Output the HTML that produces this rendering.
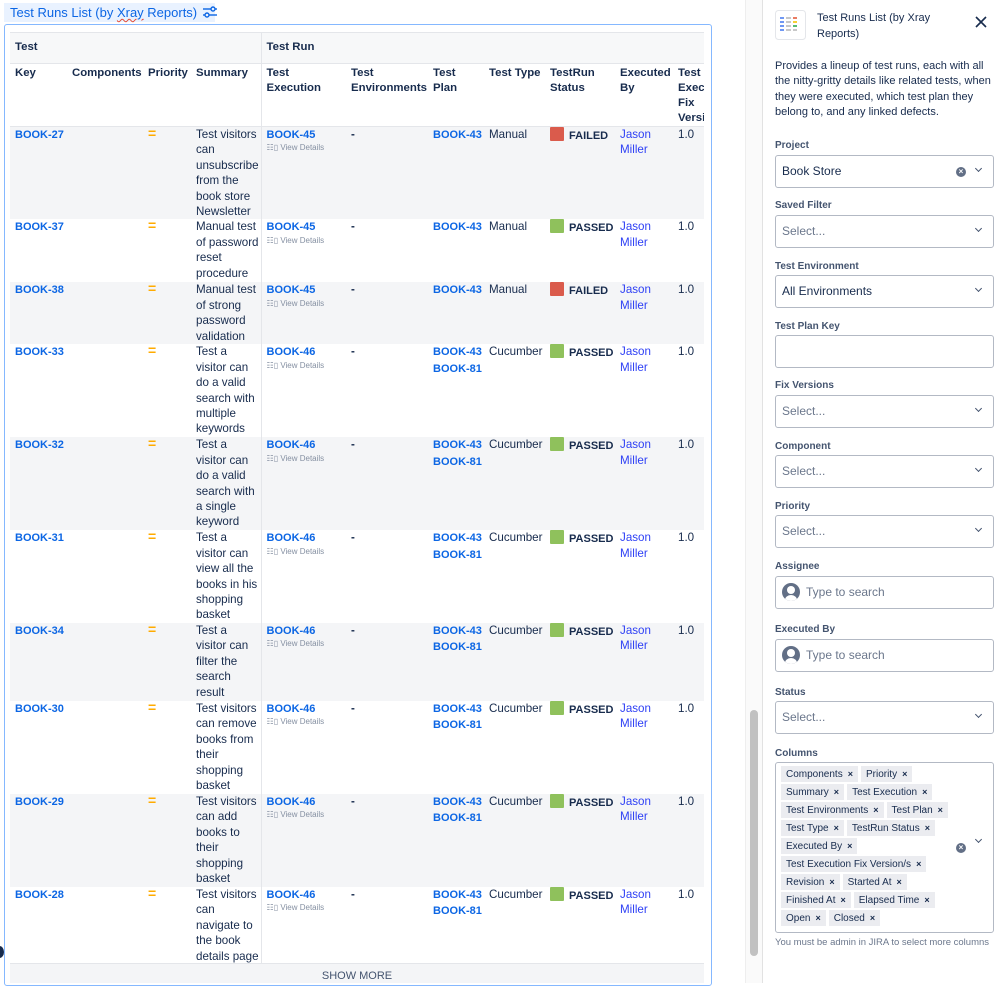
<!DOCTYPE html>
<html><head><meta charset="utf-8"><style>
*{box-sizing:border-box;margin:0;padding:0}
body{width:999px;height:983px;overflow:hidden;background:#fff;font-family:"Liberation Sans",sans-serif;color:#172b4d;position:relative}
.ttl{position:absolute;left:4px;top:3px;width:211px;height:19px;background:#e9f2ff;color:#0c66e4;font-size:13px;line-height:19px;padding-left:6px;white-space:nowrap}
.ttl u{text-decoration:underline wavy #e34935;text-decoration-thickness:1px}
.frame{position:absolute;left:4px;top:24px;width:708px;height:962px;border:1px solid #85b8ff;border-radius:3px}
.wrap{position:absolute;left:10px;top:32px;width:694px;height:931px;overflow:hidden}
table{border-collapse:collapse;table-layout:fixed;width:740px;font-size:11.6px;line-height:15.4px}
td,th{vertical-align:top;text-align:left;padding:0 0 0 5px;overflow:hidden}
td:nth-child(4){white-space:nowrap}
th{font-weight:bold;background:#fff;font-size:11.4px}
tr.g1 th{background:#f7f8f9;height:31px;vertical-align:middle;border-top:1px solid #e4e6ea;border-bottom:1px solid #e4e6ea}
tr.g2 th{height:63px;border-bottom:1px solid #e4e6ea;padding-top:2px;line-height:15px}
.nw{white-space:nowrap}
.sep{border-right:1px solid #e4e6ea}
tr.o td{background:#f4f5f7}
a{color:#0c66e4;font-weight:bold;text-decoration:none;white-space:nowrap;font-size:11px}
.p{color:#ffab00;font-weight:bold;font-size:14px;line-height:13px}
.vd{font-size:8px;color:#8590a2;line-height:10px;display:block;white-space:nowrap}
.st{display:inline-block;width:14px;height:14px;vertical-align:-2px;margin-right:5px;border-radius:1px}
.s{white-space:nowrap}.s b{font-size:11px}
.f{background:#da5b4c}.ps{background:#8fc15c}
.jm{color:#2d3ff5}
.sm{position:absolute;left:10px;top:963px;width:694px;height:20px;background:#f4f5f7;border-top:1px solid #e4e6ea;text-align:center;font-size:11px;line-height:24px;color:#44546f}
.sbt{position:absolute;left:745px;top:0;width:18px;height:983px;background:#fafafa;border-left:1px solid #eee;border-right:1px solid #e2e2e2}
.thumb{position:absolute;left:750px;top:710px;width:8px;height:246px;background:#c1c1c1;border-radius:4px}
.pn{position:absolute;left:763px;top:0;width:236px;height:983px;background:#fff}
.lbl{position:absolute;left:775px;font-size:10px;font-weight:bold;color:#44546f}
.in{position:absolute;left:775px;width:219px;height:33px;border:1px solid #b3b9c4;border-radius:3px;font-size:12px;line-height:31px;padding-left:6px;color:#172b4d}
.in.ph{color:#6b778c}
.chev{position:absolute;right:12px;top:0;font-size:10px;color:#44546f}
.chev:after{content:"";display:inline-block;width:4px;height:4px;border-right:1.5px solid #44546f;border-bottom:1.5px solid #44546f;transform:rotate(45deg);margin-bottom:3px}
.clr{position:absolute;right:27px;top:11px;width:10px;height:10px;border-radius:50%;background:#626f86;color:#fff;font-size:8px;line-height:10px;text-align:center;font-weight:bold}
.av{display:inline-block;width:18px;height:18px;border-radius:50%;background:#626f86;vertical-align:-5px;margin-right:6px;position:relative;overflow:hidden}
.av:before{content:"";position:absolute;left:5px;top:3px;width:8px;height:8px;border-radius:50%;background:#fff}
.av:after{content:"";position:absolute;left:3px;top:12px;width:12px;height:10px;border-radius:50%;background:#fff}
.tags{position:absolute;left:775px;top:762px;width:219px;height:171px;border:1px solid #b3b9c4;border-radius:3px;padding:3px 0 0 5px}
.tl{width:180px;font-size:0;line-height:0}
.tg{display:inline-block;background:#ebecf0;font-size:10px;height:16px;line-height:16px;padding:0 5px;margin:0 3px 2px 0;color:#172b4d;white-space:nowrap}
.tg b{font-size:9px;margin-left:5px}
</style></head><body>
<div class="ttl">Test Runs List (by <u>Xray</u> Reports) <svg width="14" height="12" viewBox="0 0 14 12" style="vertical-align:-1px;margin-left:2px"><g stroke="#0c66e4" stroke-width="1.4" fill="none"><line x1="0" y1="3" x2="14" y2="3"/><line x1="0" y1="9" x2="14" y2="9"/><circle cx="10" cy="3" r="2" fill="#e9f2ff"/><circle cx="4" cy="9" r="2" fill="#e9f2ff"/></g></svg></div>
<div class="frame"></div>
<div style="position:absolute;left:-5px;top:946px;width:9px;height:12px;border-radius:50%;background:#172b4d"></div>
<div class="wrap"><table>
<colgroup><col style="width:57px"><col style="width:76px"><col style="width:48px"><col style="width:70px"><col style="width:85px"><col style="width:82px"><col style="width:56px"><col style="width:61px"><col style="width:70px"><col style="width:58px"><col style="width:77px"></colgroup>
<tr class="g1"><th colspan="4" class="sep">Test</th><th colspan="7">Test Run</th></tr>
<tr class="g2"><th>Key</th><th class="nw">Components</th><th>Priority</th><th class="sep">Summary</th><th>Test<br>Execution</th><th class="nw">Test<br>Environments</th><th>Test<br>Plan</th><th class="nw">Test Type</th><th>TestRun<br>Status</th><th>Executed<br>By</th><th>Test<br>Execution<br>Fix<br>Version</th></tr>
<tr class="o" style="height:92px"><td><a>BOOK-27</a></td><td></td><td class="p">=</td><td class="sep">Test visitors<br>can<br>unsubscribe<br>from the<br>book store<br>Newsletter</td><td><a>BOOK-45</a><span class="vd">☷▯ View Details</span></td><td><b>-</b></td><td><a>BOOK-43</a></td><td>Manual</td><td class="s"><span class="st f"></span><b>FAILED</b></td><td class="jm">Jason<br>Miller</td><td>1.0</td></tr>
<tr style="height:63px"><td><a>BOOK-37</a></td><td></td><td class="p">=</td><td class="sep">Manual test<br>of password<br>reset<br>procedure</td><td><a>BOOK-45</a><span class="vd">☷▯ View Details</span></td><td><b>-</b></td><td><a>BOOK-43</a></td><td>Manual</td><td class="s"><span class="st ps"></span><b>PASSED</b></td><td class="jm">Jason<br>Miller</td><td>1.0</td></tr>
<tr class="o" style="height:62px"><td><a>BOOK-38</a></td><td></td><td class="p">=</td><td class="sep">Manual test<br>of strong<br>password<br>validation</td><td><a>BOOK-45</a><span class="vd">☷▯ View Details</span></td><td><b>-</b></td><td><a>BOOK-43</a></td><td>Manual</td><td class="s"><span class="st f"></span><b>FAILED</b></td><td class="jm">Jason<br>Miller</td><td>1.0</td></tr>
<tr style="height:93px"><td><a>BOOK-33</a></td><td></td><td class="p">=</td><td class="sep">Test a<br>visitor can<br>do a valid<br>search with<br>multiple<br>keywords</td><td><a>BOOK-46</a><span class="vd">☷▯ View Details</span></td><td><b>-</b></td><td><a>BOOK-43</a><br><a>BOOK-81</a></td><td>Cucumber</td><td class="s"><span class="st ps"></span><b>PASSED</b></td><td class="jm">Jason<br>Miller</td><td>1.0</td></tr>
<tr class="o" style="height:93px"><td><a>BOOK-32</a></td><td></td><td class="p">=</td><td class="sep">Test a<br>visitor can<br>do a valid<br>search with<br>a single<br>keyword</td><td><a>BOOK-46</a><span class="vd">☷▯ View Details</span></td><td><b>-</b></td><td><a>BOOK-43</a><br><a>BOOK-81</a></td><td>Cucumber</td><td class="s"><span class="st ps"></span><b>PASSED</b></td><td class="jm">Jason<br>Miller</td><td>1.0</td></tr>
<tr style="height:92px"><td><a>BOOK-31</a></td><td></td><td class="p">=</td><td class="sep">Test a<br>visitor can<br>view all the<br>books in his<br>shopping<br>basket</td><td><a>BOOK-46</a><span class="vd">☷▯ View Details</span></td><td><b>-</b></td><td><a>BOOK-43</a><br><a>BOOK-81</a></td><td>Cucumber</td><td class="s"><span class="st ps"></span><b>PASSED</b></td><td class="jm">Jason<br>Miller</td><td>1.0</td></tr>
<tr class="o" style="height:78px"><td><a>BOOK-34</a></td><td></td><td class="p">=</td><td class="sep">Test a<br>visitor can<br>filter the<br>search<br>result</td><td><a>BOOK-46</a><span class="vd">☷▯ View Details</span></td><td><b>-</b></td><td><a>BOOK-43</a><br><a>BOOK-81</a></td><td>Cucumber</td><td class="s"><span class="st ps"></span><b>PASSED</b></td><td class="jm">Jason<br>Miller</td><td>1.0</td></tr>
<tr style="height:93px"><td><a>BOOK-30</a></td><td></td><td class="p">=</td><td class="sep">Test visitors<br>can remove<br>books from<br>their<br>shopping<br>basket</td><td><a>BOOK-46</a><span class="vd">☷▯ View Details</span></td><td><b>-</b></td><td><a>BOOK-43</a><br><a>BOOK-81</a></td><td>Cucumber</td><td class="s"><span class="st ps"></span><b>PASSED</b></td><td class="jm">Jason<br>Miller</td><td>1.0</td></tr>
<tr class="o" style="height:93px"><td><a>BOOK-29</a></td><td></td><td class="p">=</td><td class="sep">Test visitors<br>can add<br>books to<br>their<br>shopping<br>basket</td><td><a>BOOK-46</a><span class="vd">☷▯ View Details</span></td><td><b>-</b></td><td><a>BOOK-43</a><br><a>BOOK-81</a></td><td>Cucumber</td><td class="s"><span class="st ps"></span><b>PASSED</b></td><td class="jm">Jason<br>Miller</td><td>1.0</td></tr>
<tr style="height:77px"><td><a>BOOK-28</a></td><td></td><td class="p">=</td><td class="sep">Test visitors<br>can<br>navigate to<br>the book<br>details page</td><td><a>BOOK-46</a><span class="vd">☷▯ View Details</span></td><td><b>-</b></td><td><a>BOOK-43</a><br><a>BOOK-81</a></td><td>Cucumber</td><td class="s"><span class="st ps"></span><b>PASSED</b></td><td class="jm">Jason<br>Miller</td><td>1.0</td></tr>
</table></div>
<div class="sm">SHOW MORE</div>
<div class="sbt"></div><div class="thumb"></div>
<div class="pn"></div>
<svg style="position:absolute;left:775px;top:10px" width="31" height="30" viewBox="0 0 31 30"><rect x="0.5" y="0.5" width="30" height="29" rx="3" fill="#fff" stroke="#e4e6ea"/><g stroke-width="1.6"><line x1="5" y1="8" x2="9" y2="8" stroke="#4c7ef0"/><line x1="11" y1="8" x2="16" y2="8" stroke="#bbb"/><line x1="18" y1="8" x2="22" y2="8" stroke="#e55b3c"/><line x1="5" y1="12" x2="9" y2="12" stroke="#4c7ef0"/><line x1="11" y1="12" x2="16" y2="12" stroke="#bbb"/><line x1="18" y1="12" x2="22" y2="12" stroke="#f5c400"/><line x1="5" y1="16" x2="9" y2="16" stroke="#4c7ef0"/><line x1="11" y1="16" x2="16" y2="16" stroke="#bbb"/><line x1="18" y1="16" x2="22" y2="16" stroke="#2fa84f"/><line x1="5" y1="20" x2="9" y2="20" stroke="#4c7ef0"/><line x1="11" y1="20" x2="16" y2="20" stroke="#bbb"/><line x1="18" y1="20" x2="22" y2="20" stroke="#bbb"/></g></svg>
<div style="position:absolute;left:817px;top:11px;width:150px;font-size:11px;line-height:15.5px">Test Runs List (by Xray Reports)</div>
<svg style="position:absolute;left:975px;top:16px" width="12" height="12"><path d="M1 1L11 11M11 1L1 11" stroke="#172b4d" stroke-width="1.6"/></svg>
<div style="position:absolute;left:775px;top:59px;width:224px;font-size:11px;line-height:15.4px">Provides a lineup of test runs, each with all the nitty-gritty details like related tests, when they were executed, which test plan they belong to, and any linked defects.</div>
<div class="lbl" style="top:140px">Project</div><div class="in" style="top:155px">Book Store<span class="clr">×</span><span class="chev"></span></div>
<div class="lbl" style="top:200px">Saved Filter</div><div class="in ph" style="top:215px">Select...<span class="chev"></span></div>
<div class="lbl" style="top:261px">Test Environment</div><div class="in" style="top:275px">All Environments<span class="chev"></span></div>
<div class="lbl" style="top:321px">Test Plan Key</div><div class="in" style="top:335px"></div>
<div class="lbl" style="top:380px">Fix Versions</div><div class="in ph" style="top:395px">Select...<span class="chev"></span></div>
<div class="lbl" style="top:441px">Component</div><div class="in ph" style="top:455px">Select...<span class="chev"></span></div>
<div class="lbl" style="top:501px">Priority</div><div class="in ph" style="top:515px">Select...<span class="chev"></span></div>
<div class="lbl" style="top:561px">Assignee</div><div class="in ph" style="top:576px"><span class="av"></span>Type to search</div>
<div class="lbl" style="top:624px">Executed By</div><div class="in ph" style="top:639px"><span class="av"></span>Type to search</div>
<div class="lbl" style="top:687px">Status</div><div class="in ph" style="top:701px">Select...<span class="chev"></span></div>
<div class="lbl" style="top:748px">Columns</div>
<div class="tags"><div class="tl">
<span class="tg">Components<b>×</b></span><span class="tg">Priority<b>×</b></span>
<span class="tg">Summary<b>×</b></span><span class="tg">Test Execution<b>×</b></span>
<span class="tg">Test Environments<b>×</b></span><span class="tg">Test Plan<b>×</b></span>
<span class="tg">Test Type<b>×</b></span><span class="tg">TestRun Status<b>×</b></span>
<span class="tg">Executed By<b>×</b></span><br>
<span class="tg">Test Execution Fix Version/s<b>×</b></span><br>
<span class="tg">Revision<b>×</b></span><span class="tg">Started At<b>×</b></span>
<span class="tg">Finished At<b>×</b></span><span class="tg">Elapsed Time<b>×</b></span>
<span class="tg">Open<b>×</b></span><span class="tg">Closed<b>×</b></span></div>
<span class="clr" style="top:80px;right:27px">×</span><span class="chev" style="top:74px;line-height:12px"></span></div>
<div style="position:absolute;left:775px;top:937px;font-size:9.5px;color:#6b778c">You must be admin in JIRA to select more columns</div>
</body></html>
